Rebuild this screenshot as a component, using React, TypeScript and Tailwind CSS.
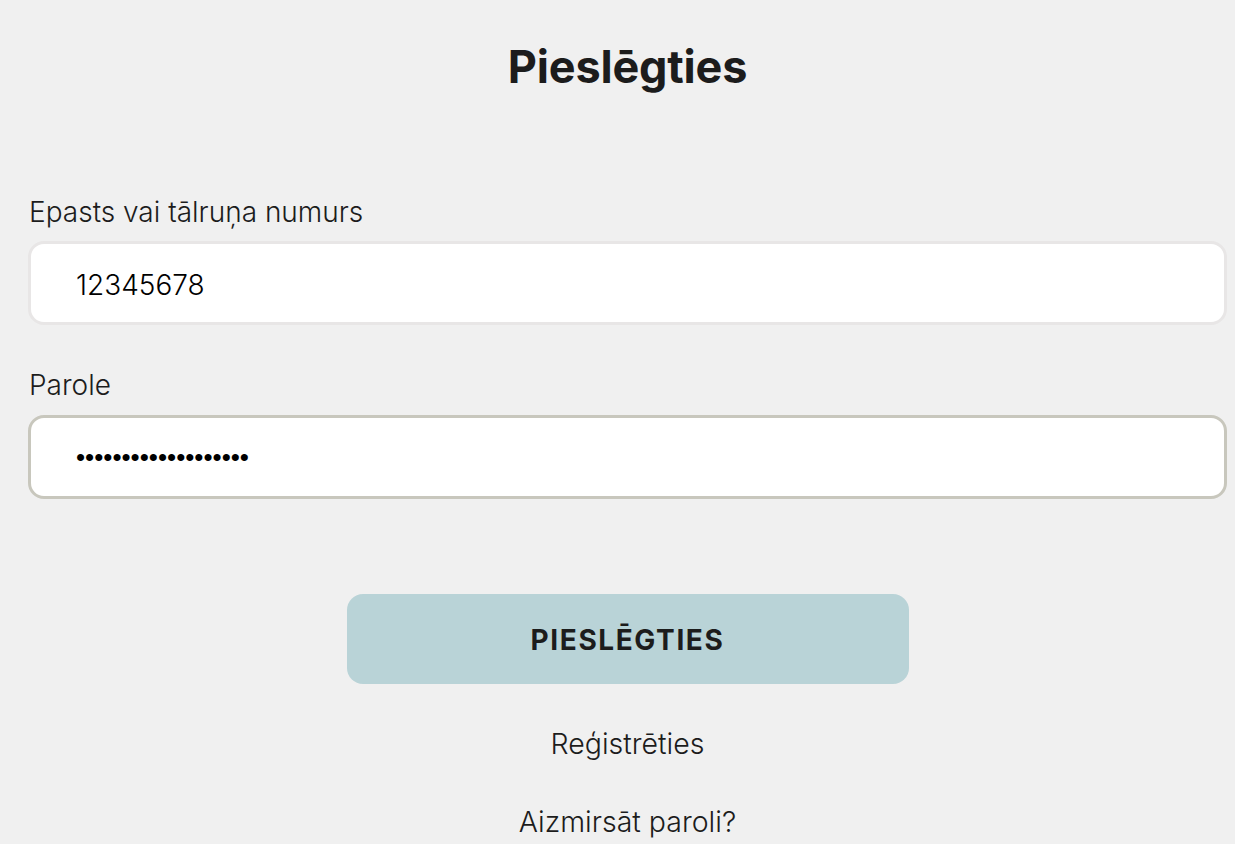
export default function App() {
  return (
    <div className="min-h-[844px] w-full bg-[#f0f0f0] text-[#1c1c1c]" style={{ fontFamily: 'Inter, "Liberation Sans", sans-serif' }}>
      <div className="flex flex-col pl-[28px] pr-[8px]">
        <h1 className="mt-[43px] text-center text-[45px] font-bold leading-[48px] tracking-[-0.2px] text-[#1c1c1c]">Pieslēgties</h1>

        <label className="mt-[105px] pl-[1px] text-[28px] font-light leading-[32px] text-[#1c1c1c]">Epasts vai tālruņa numurs</label>
        <div className="mt-[13px] flex h-[84px] items-center rounded-[16px] border-[3px] border-[#e8e6e6] bg-white pl-[45px] pt-[3px]">
          <span className="text-[28px] font-light leading-[32px] text-black">12345678</span>
        </div>

        <label className="mt-[44px] pl-[1px] text-[28px] font-light leading-[32px] text-[#1c1c1c]">Parole</label>
        <div className="mt-[14px] flex h-[84px] items-center rounded-[16px] border-[3px] border-[#c8c7bd] bg-white pl-[45px]">
          <span className="text-[26px] leading-[20px] tracking-[0px] text-black" style={{ fontFamily: '"Liberation Sans", sans-serif' }}>•••••••••••••••••••</span>
        </div>

        <div className="mt-[95px] flex justify-center">
          <button className="flex h-[90px] w-[562px] items-center justify-center rounded-[16px] bg-[#b9d3d7] pt-[2px] text-[28px] font-bold tracking-[1.6px] text-[#1c1c1c]">
            PIESLĒGTIES
          </button>
        </div>

        <div className="mt-[44px] text-center text-[28.5px] font-light leading-[32px] text-[#1c1c1c]">Reģistrēties</div>
        <div className="mt-[46px] text-center text-[28.5px] font-light leading-[32px] text-[#1c1c1c]">Aizmirsāt paroli?</div>
      </div>
    </div>
  );
}
